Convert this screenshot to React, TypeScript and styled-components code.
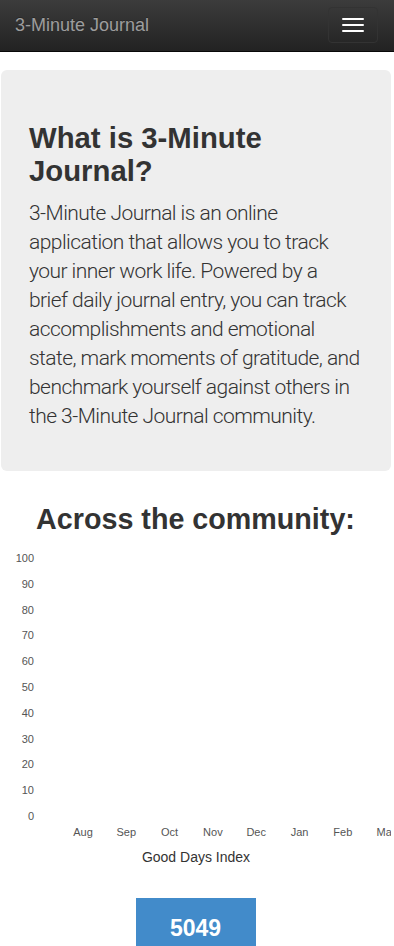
import styled, { createGlobalStyle } from 'styled-components';

const GlobalStyle = createGlobalStyle`
  * {
    box-sizing: border-box;
  }
  body {
    margin: 0;
    background: #fff;
    color: #333;
    font-family: 'Liberation Sans', Arial, sans-serif;
  }
`;

const MONTHS = ['Aug', 'Sep', 'Oct', 'Nov', 'Dec', 'Jan', 'Feb', 'Mar'];
const TICKS = [100, 90, 80, 70, 60, 50, 40, 30, 20, 10, 0];

// lines broken the way the original page wraps them
const LEAD_LINES = [
  '3-Minute Journal is an online',
  'application that allows you to track',
  'your inner work life. Powered by a',
  'brief daily journal entry, you can track',
  'accomplishments and emotional',
  'state, mark moments of gratitude, and',
  'benchmark yourself against others in',
  'the 3-Minute Journal community.',
];

function Chart() {
  return (
    <ChartSvg width="391" height="335" viewBox="0 0 391 335">
      {TICKS.map((tick, i) => (
        <AxisText key={tick} x={34} y={21 + i * 25.8} textAnchor="end">
          {tick}
        </AxisText>
      ))}
      {MONTHS.map((month, i) => (
        <AxisText key={month} x={83 + i * 43.3} y={295} textAnchor="middle">
          {month}
        </AxisText>
      ))}
      <AxisTitle x={196} y={321} textAnchor="middle">
        Good Days Index
      </AxisTitle>
    </ChartSvg>
  );
}

function App() {
  return (
    <>
      <GlobalStyle />
      <Navbar>
        <Brand>3-Minute Journal</Brand>
        <Toggle aria-label="Toggle navigation">
          <Bar />
          <Bar />
          <Bar />
        </Toggle>
      </Navbar>

      <Jumbotron>
        <Heading>What is 3-Minute Journal?</Heading>
        <Lead>
          {LEAD_LINES.map((line, i) => (
            <span key={line}>
              {line}
              {i < LEAD_LINES.length - 1 && <br />}
            </span>
          ))}
        </Lead>
      </Jumbotron>

      <Community>
        <SectionTitle>Across the community:</SectionTitle>
        <Chart />
        <Stat>5049</Stat>
      </Community>
    </>
  );
}

export default App;

const Navbar = styled.nav`
  display: flex;
  align-items: center;
  justify-content: space-between;
  height: 52px;
  padding: 0 15px;
  background: linear-gradient(to bottom, #3c3c3c 0%, #222 100%);
  border-bottom: 1px solid #080808;
`;

const Brand = styled.a`
  font-size: 18px;
  line-height: 20px;
  color: #9d9d9d;
  text-shadow: 0 -1px 0 rgba(0, 0, 0, 0.25);
  margin-top: -1px;
`;

const Toggle = styled.button`
  display: flex;
  flex-direction: column;
  align-items: center;
  gap: 4px;
  width: 50px;
  height: 36px;
  margin-right: 1px;
  margin-top: -1px;
  padding: 0;
  justify-content: center;
  background: transparent;
  border: 1px solid #333;
  border-radius: 4px;
`;

const Bar = styled.span`
  display: block;
  width: 22px;
  height: 2px;
  border-radius: 1px;
  background: #fff;
`;

const Jumbotron = styled.section`
  margin: 18px 3px 0 1px;
  padding: 30px 18px 30px 28px;
  background: #eee;
  border-radius: 6px;
`;

const Heading = styled.h1`
  margin: 21px 0 12px;
  font-size: 29.3px;
  line-height: 33px;
  font-weight: 700;
  color: #333;
`;

const Lead = styled.p`
  margin: 0 0 10px;
  font-family: Roboto, 'Liberation Sans', Arial, sans-serif;
  font-size: 21px;
  line-height: 29px;
  font-weight: 300;
  letter-spacing: -0.55px;
  color: #333;
`;

const Community = styled.section`
  display: flex;
  flex-direction: column;
  align-items: center;
  width: 391px;
  overflow: hidden;
`;

const SectionTitle = styled.h2`
  margin: 32px 0 5px;
  font-size: 28.7px;
  line-height: 33px;
  font-weight: 700;
  color: #333;
  text-align: center;
`;

const ChartSvg = styled.svg`
  display: block;
  align-self: flex-start;
`;

const AxisText = styled.text`
  font-family: 'Liberation Sans', Arial, sans-serif;
  font-size: 11px;
  fill: #555;
`;

const AxisTitle = styled.text`
  font-family: 'Liberation Sans', Arial, sans-serif;
  font-size: 14px;
  fill: #333;
`;

const Stat = styled.div`
  margin-top: 22px;
  width: 120px;
  padding: 17px 0 20px;
  background: #428bca;
  color: #fff;
  font-size: 23px;
  line-height: 26px;
  font-weight: 700;
  text-align: center;
`;
